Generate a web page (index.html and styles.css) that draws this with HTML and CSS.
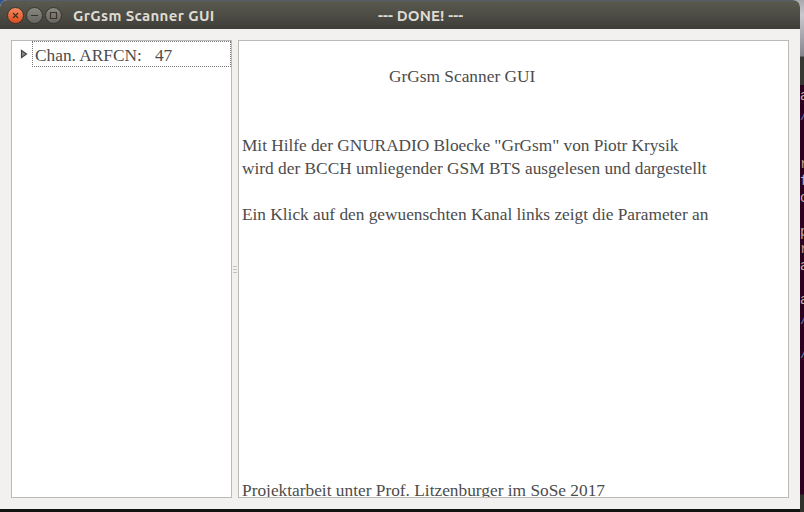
FILE: index.html
```html
<!DOCTYPE html>
<html lang="de">
<head>
<meta charset="utf-8">
<title>GrGsm Scanner GUI</title>
<link rel="stylesheet" href="styles.css">
</head>
<body>
<div class="desktop">
  <main class="window">
    <header class="titlebar">
      <svg class="controls" width="56" height="20" viewBox="0 0 56 20">
        <defs>
          <linearGradient id="close" x1="0" y1="0" x2="0" y2="1"><stop offset="0" stop-color="#f58b60"/><stop offset="1" stop-color="#dc4a1c"/></linearGradient>
          <linearGradient id="gray" x1="0" y1="0" x2="0" y2="1"><stop offset="0" stop-color="#8b8a81"/><stop offset="1" stop-color="#65645d"/></linearGradient>
        </defs>
        <g stroke="#35342f" stroke-width="1">
          <circle cx="8.5" cy="10.5" r="8" fill="url(#close)"/>
          <circle cx="27.5" cy="10.5" r="8" fill="url(#gray)"/>
          <circle cx="46.5" cy="10.5" r="8" fill="url(#gray)"/>
        </g>
        <g fill="none" stroke="#3c3129" stroke-width="1.2">
          <path d="M6 8l5 5M11 8l-5 5"/>
          <path d="M24 10.5h7"/>
          <path d="M43.5 7.5h6v6h-6z"/>
        </g>
      </svg>
      <h1 class="title">GrGsm Scanner GUI</h1>
      <span class="status">--- DONE! ---</span>
    </header>
    <div class="content">
      <section class="panel tree">
        <div class="tree-row">
          <svg class="expander" width="8" height="10" viewBox="0 0 8 10"><path d="M1.5 1.5v7l5-3.5z" fill="#8a8a8a" stroke="#454545" stroke-width="1.2"/></svg>
          <span class="tree-label">Chan. ARFCN:   47</span>
        </div>
      </section>
      <div class="splitter"><i></i><i></i><i></i></div>
      <section class="panel details">
        <p class="line heading">GrGsm Scanner GUI</p>
        <p class="line intro">Mit Hilfe der GNURADIO Bloecke "GrGsm" von Piotr Krysik</p>
        <p class="line">wird der BCCH umliegender GSM BTS ausgelesen und dargestellt</p>
        <p class="line hint">Ein Klick auf den gewuenschten Kanal links zeigt die Parameter an</p>
        <p class="line credit">Projektarbeit unter Prof. Litzenburger im SoSe 2017</p>
      </section>
    </div>
  </main>
  <aside class="terminal">
    <pre class="output">a
<b>/</b>


<em>r</em>
f
c

p
<em>r</em>
a

a
<b>/</b>

<b>/</b></pre>
  </aside>
</div>
</body>
</html>
```
FILE: styles.css
```css
* { box-sizing: border-box; }

body {
  margin: 0;
  overflow: hidden;
}

.desktop {
  display: flex;
  width: 804px;
  height: 512px;
  background: linear-gradient(90deg, #2a5793, #7a8793 50%, #a9a8ae) top / 100% 6px no-repeat, #111312;
}

.window {
  display: flex;
  flex-direction: column;
  width: 800px;
  height: 509px;
  background: #f2f1f0;
  border-radius: 7px 7px 0 0;
  overflow: hidden;
}

.titlebar {
  display: flex;
  align-items: center;
  height: 29px;
  flex: none;
  padding: 2px 0 0 7px;
  border-top: 1px solid #555f68;
  background: linear-gradient(#5b5a51, #3e3d38);
  color: #dfdbd2;
  font: 700 15px/20px "Ubuntu", "Noto Sans", sans-serif;
}

.controls { flex: none; margin-top: -2px; }

.title {
  width: 305px;
  margin: 0 0 0 10px;
  font: inherit;
  letter-spacing: 0.36px;
  white-space: nowrap;
}

.status {
  letter-spacing: 0.12px;
  white-space: nowrap;
}

.content {
  display: flex;
  flex: 1;
  min-height: 0;
  padding: 11px;
  color: #4c4c4c;
  font: 17.33px/23px "Liberation Serif", serif;
}

.panel {
  border: 1px solid #bcbab6;
  background: #fff;
  overflow: hidden;
}

.tree {
  width: 221px;
  flex: none;
}

.tree-row {
  display: flex;
  align-items: center;
  height: 26px;
  padding-left: 8px;
}

.expander { flex: none; margin: -1px 4px 0 0; }

.tree-label {
  flex: 1;
  height: 26px;
  padding: 2px 0 0 2px;
  border: 1px dotted #777;
  line-height: 23px;
  white-space: pre;
}

.splitter {
  display: flex;
  flex: none;
  flex-direction: column;
  justify-content: center;
  align-items: center;
  gap: 2px;
  width: 6px;
}

.splitter i {
  width: 4px;
  height: 1px;
  background: #c4c2bf;
}

.details {
  flex: 1;
  padding: 24px 0 0 3px;
}

.line {
  height: 23px;
  margin: 0;
  white-space: pre;
}

.heading { padding-left: 147px; }
.intro { margin-top: 46px; letter-spacing: -0.04px; }
.hint { margin-top: 23px; letter-spacing: -0.02px; }
.credit { margin-top: 253px; }

.terminal {
  width: 4px;
  height: 512px;
  overflow: hidden;
  background: linear-gradient(#a9a8ae 0, #c9c8cd 15px, #85848d 56px, #373834 57px, #373834 85px, #2c001e 85px, #2c001e 494px, #30302d 495px);
}

.output {
  margin: 88px 0 0;
  color: #b9b3b8;
  font: 14px/17px "Liberation Mono", monospace;
}

.output b { position: relative; top: 3px; color: #4b78b8; font-weight: 400; }
.output em { color: #c99d86; font-style: normal; }
```
